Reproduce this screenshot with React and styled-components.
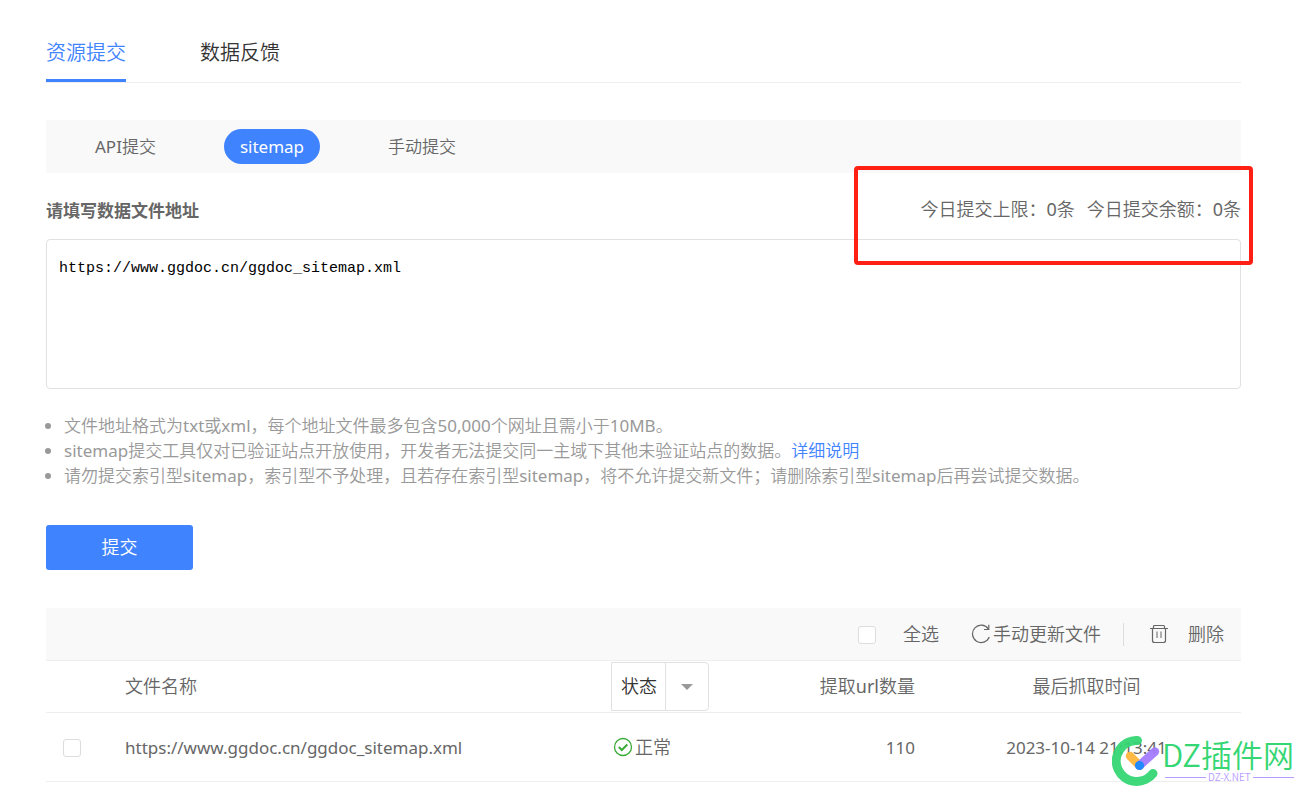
import { useState } from "react";
import styled, { createGlobalStyle } from "styled-components";

const color = {
  blue: "#4083ff",
  text: "#666",
  dark: "#333",
  light: "#999",
  line: "#eee",
  border: "#e1e1e1",
  panel: "#f9f9f9",
};

const tabs = ["资源提交", "数据反馈"];
const methods = ["API提交", "sitemap", "手动提交"];
const files = [
  {
    url: "https://www.ggdoc.cn/ggdoc_sitemap.xml",
    status: "正常",
    count: 110,
    time: "2023-10-14 21:13:41",
  },
];

const App = () => {
  const [tab, setTab] = useState(tabs[0]);
  const [method, setMethod] = useState(methods[1]);
  const [address, setAddress] = useState(files[0].url);

  return (
    <>
      <GlobalStyle />
      <Page>
        <Tabs>
          {tabs.map((el) => (
            <Tab key={el} $active={el === tab} onClick={() => setTab(el)}>
              {el}
            </Tab>
          ))}
        </Tabs>

        <Methods>
          {methods.map((el) => (
            <Method
              key={el}
              $active={el === method}
              onClick={() => setMethod(el)}
            >
              {el}
            </Method>
          ))}
        </Methods>

        <FormHead>
          <FormLabel htmlFor="address">请填写数据文件地址</FormLabel>
          <Quota>
            <span>今日提交上限：0条</span>
            <span>今日提交余额：0条</span>
          </Quota>
          <Highlight />
        </FormHead>
        <AddressInput
          id="address"
          spellCheck={false}
          value={address}
          onChange={(e) => setAddress(e.target.value)}
        />

        <Notes>
          <li>
            文件地址格式为txt或xml，每个地址文件最多包含50,000个网址且需小于10MB。
          </li>
          <li>
            sitemap提交工具仅对已验证站点开放使用，开发者无法提交同一主域下其他未验证站点的数据。
            <a href="#detail">详细说明</a>
          </li>
          <li>
            请勿提交索引型sitemap，索引型不予处理，且若存在索引型sitemap，将不允许提交新文件；请删除索引型sitemap后再尝试提交数据。
          </li>
        </Notes>

        <Submit>提交</Submit>

        <Toolbar>
          <SelectAll>
            <Checkbox />
            全选
          </SelectAll>
          <Action $gap="2px">
            <RefreshIcon />
            手动更新文件
          </Action>
          <Divider />
          <Action $gap="20px">
            <TrashIcon />
            删除
          </Action>
        </Toolbar>

        <Table>
          <colgroup>
            <Col $width="79px" />
            <Col />
            <Col $width="150px" />
            <Col $width="171px" />
            <Col $width="309px" />
          </colgroup>
          <thead>
            <tr>
              <Th />
              <Th>文件名称</Th>
              <Th>
                <Filter>
                  <select aria-label="状态" defaultValue="状态">
                    <option>状态</option>
                    <option>正常</option>
                  </select>
                  <FilterArrow>
                    <svg width="12" height="6" viewBox="0 0 12 6">
                      <path d="M0 0h12L6 6z" fill="#999" />
                    </svg>
                  </FilterArrow>
                </Filter>
              </Th>
              <Th $align="right">提取url数量</Th>
              <Th $align="center">最后抓取时间</Th>
            </tr>
          </thead>
          <tbody>
            {files.map((el) => (
              <tr key={el.url}>
                <Td>
                  <RowCheck>
                    <Checkbox aria-label={el.url} />
                  </RowCheck>
                </Td>
                <Td>{el.url}</Td>
                <Td>
                  <Status>
                    <OkIcon />
                    {el.status}
                  </Status>
                </Td>
                <Td $align="right">{el.count}</Td>
                <Td $align="center">{el.time}</Td>
              </tr>
            ))}
          </tbody>
        </Table>

        <Watermark>
          <WatermarkLogo />
          <WatermarkText>
            <WatermarkName>DZ插件网</WatermarkName>
            <WatermarkSite>DZ-X.NET</WatermarkSite>
          </WatermarkText>
        </Watermark>
      </Page>
    </>
  );
};
export default App;

const RefreshIcon = () => (
  <svg width="20" height="20" viewBox="0 0 20 20" fill="none" stroke="#666">
    <path d="M18.300 13A8.700 8.700 0 1 1 17.300 4.800" strokeWidth="1.200" />
    <path d="M17.800 0.800v4.700h-4.800" strokeWidth="1.200" />
  </svg>
);

const TrashIcon = () => (
  <svg width="18" height="20" viewBox="0 0 18 20" fill="none" stroke="#666">
    <path d="M0 4.500h18M3.500 4V2.500a1 1 0 0 1 1-1h9a1 1 0 0 1 1 1V4" strokeWidth="1.200" />
    <path d="M2.500 4.500v12a2 2 0 0 0 2 2h9a2 2 0 0 0 2-2v-12" strokeWidth="1.200" />
    <path d="M7 7.500v6.500M11 7.500v6.500" strokeWidth="1" />
  </svg>
);

const OkIcon = () => (
  <svg width="20" height="20" viewBox="0 0 20 20" fill="none" stroke="#3cab36">
    <circle cx="10" cy="10" r="8.500" strokeWidth="1.300" />
    <path d="M5.800 10l3 3 5.500-5.500" strokeWidth="2" />
  </svg>
);

const WatermarkLogo = () => (
  <svg width="50" height="50" viewBox="0 0 50 50" fill="none">
    <g strokeLinecap="round">
      <path
        d="M25.500 4.500A20.500 20.500 0 1 0 41 37.500"
        stroke="#35d673"
        strokeWidth="9"
      />
      <path d="M18 20l9.500 9.500" stroke="#ffb63c" strokeWidth="8.500" />
      <path d="M43 15.500L27.500 29.500" stroke="#a47cff" strokeWidth="8.500" />
    </g>
    <circle cx="27.500" cy="29.500" r="4.600" fill="#1684ff" />
  </svg>
);

const Checkbox = styled.input.attrs({ type: "checkbox" })`
  appearance: none;
  width: 18px;
  height: 18px;
  margin: 2px 0 0;
  background: #fff;
  border: 1px solid #ddd;
  border-radius: 3px;

  &:checked {
    background: ${color.blue};
  }
`;

const GlobalStyle = createGlobalStyle`
  * {
    box-sizing: border-box;
  }
  body {
    margin: 0;
    background: #fff;
    color: ${color.text};
    font-family: "Noto Sans", "Noto Sans CJK SC DemiLight", "Noto Sans CJK SC", sans-serif;
    font-size: 17px;
    line-height: 25px;
  }
  button, select {
    padding: 0;
    border: 0;
    background: none;
    color: inherit;
    font: inherit;
    cursor: pointer;
  }
  svg {
    flex: none;
    display: block;
  }
`;

const Page = styled.main`
  position: relative;
  padding: 22px 71px 20px 46px;
`;

const Tabs = styled.nav`
  display: flex;
  gap: 74px;
  border-bottom: 1px solid ${color.line};
`;
const Tab = styled.button`
  height: 60px;
  padding-top: 4px;
  border-bottom: 3px solid
    ${(props) => (props.$active ? color.blue : "transparent")};
  color: ${(props) => (props.$active ? color.blue : color.dark)};
  font-size: 20px;
`;

const Methods = styled.nav`
  display: flex;
  align-items: center;
  gap: 52px;
  height: 53px;
  margin-top: 37px;
  padding-left: 33px;
  background: ${color.panel};
`;
const Method = styled.button`
  height: 35px;
  padding: 0 16px;
  border-radius: 18px;
  background: ${(props) => (props.$active ? color.blue : "none")};
  color: ${(props) => (props.$active ? "#fff" : color.text)};
`;

const FormHead = styled.div`
  position: relative;
  display: flex;
  justify-content: space-between;
  align-items: center;
  height: 66px;
  padding-top: 6px;
`;
const FormLabel = styled.label`
  font-family: "Noto Sans CJK SC", sans-serif;
  font-weight: 700;
`;
const Quota = styled.div`
  display: flex;
  gap: 12px;
  font-size: 18px;
`;
const Highlight = styled.div`
  position: absolute;
  top: -7px;
  right: -12px;
  width: 399px;
  height: 99px;
  border: 4px solid #ff2013;
  border-radius: 4px;
  pointer-events: none;
`;
const AddressInput = styled.textarea`
  display: block;
  width: 100%;
  height: 150px;
  padding: 16px 12px;
  border: 1px solid ${color.border};
  border-radius: 4px;
  outline: none;
  resize: none;
  color: #000;
  font-family: "Liberation Mono", monospace;
  font-size: 15px;
  line-height: 25px;
`;

const Notes = styled.ul`
  margin: 24px 0 0;
  padding-left: 18px;
  color: ${color.light};

  a {
    color: ${color.blue};
    text-decoration: none;
  }
`;

const Submit = styled.button`
  display: block;
  width: 147px;
  height: 45px;
  margin-top: 37px;
  border-radius: 3px;
  background: ${color.blue};
  color: #fff;
  font-size: 18px;
`;

const Toolbar = styled.div`
  display: flex;
  justify-content: flex-end;
  align-items: center;
  height: 52px;
  margin-top: 38px;
  padding-right: 17px;
  background: ${color.panel};
  font-size: 18px;
`;
const SelectAll = styled.label`
  display: flex;
  align-items: center;
  gap: 27px;
  margin-right: 32px;
`;
const Action = styled.button`
  display: flex;
  align-items: center;
  gap: ${(props) => props.$gap};
`;
const Divider = styled.span`
  width: 1px;
  height: 23px;
  margin: 0 26px 0 22px;
  background: #ddd;
`;

const Table = styled.table`
  width: 100%;
  table-layout: fixed;
  border-collapse: collapse;
  border-top: 1px solid ${color.line};
`;
const Col = styled.col`
  width: ${(props) => props.$width || "auto"};
`;
const Th = styled.th`
  height: 52px;
  padding: 0;
  border-bottom: 1px solid ${color.line};
  font-size: 18px;
  font-weight: inherit;
  text-align: ${(props) => props.$align || "left"};

  &:nth-child(4) {
    padding-right: 17px;
  }
`;
const Td = styled.td`
  height: 69px;
  padding: 0;
  border-bottom: 1px solid ${color.line};
  text-align: ${(props) => props.$align || "left"};

  &:nth-child(4) {
    padding-right: 17px;
  }
`;
const RowCheck = styled.div`
  display: flex;
  padding-left: 17px;
`;
const Filter = styled.div`
  display: grid;
  grid-template-columns: 53px 43px;
  width: 98px;
  height: 49px;
  border: 1px solid ${color.border};
  border-radius: 0 4px 4px 0;
  color: ${color.dark};

  select {
    grid-area: 1 / 1 / 2 / 3;
    appearance: none;
    padding-left: 9px;
    outline: none;
  }
`;
const FilterArrow = styled.span`
  grid-area: 1 / 2;
  display: flex;
  justify-content: center;
  align-items: center;
  border-left: 1px solid ${color.border};
  pointer-events: none;
`;
const Status = styled.div`
  display: flex;
  align-items: center;
  gap: 2px;
  padding-left: 2px;
  font-size: 18px;
`;

const Watermark = styled.div`
  position: absolute;
  top: 736px;
  right: 18px;
  display: flex;

  svg {
    opacity: 0.95;
  }
`;
const WatermarkText = styled.div`
  display: flex;
  flex-direction: column;
  font-family: "Noto Sans CJK SC DemiLight", "Noto Sans CJK SC", sans-serif;
`;
const WatermarkName = styled.span`
  color: #35d673;
  font-size: 31px;
  line-height: 36px;
`;
const WatermarkSite = styled.span`
  display: flex;
  align-items: center;
  gap: 2px;
  padding-left: 3px;
  color: #b79bff;
  font-size: 10px;
  line-height: 10px;

  &::before,
  &::after {
    content: "";
    flex: 1;
    height: 1px;
    background: #b79bff;
  }
`;
